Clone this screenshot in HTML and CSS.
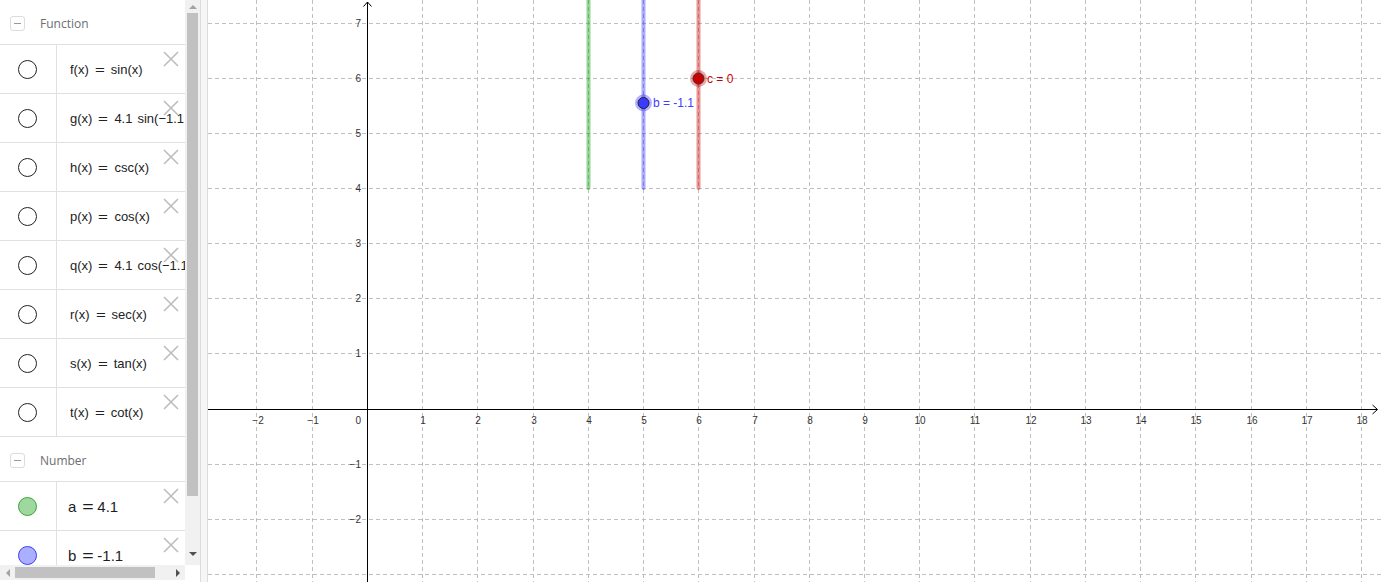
FILE: index.html
```html
<!DOCTYPE html>
<html>
<head>
<meta charset="utf-8">
<link rel="stylesheet" href="styles.css">
</head>
<body>
<div class="app">
  <aside class="av">
    <div class="av-main">
      <div class="av-list">
        <div class="group-head">
          <span class="collapse"><span class="minus"></span></span>
          <span class="group-title">Function</span>
        </div>
        <div class="row"><div class="marker"><span class="dot"></span></div><div class="formula">f(x)<span class="eq">=</span>sin(x)</div><svg class="del" viewBox="0 0 16 16"><path d="M1 1L15 15M15 1L1 15"/></svg></div>
        <div class="row"><div class="marker"><span class="dot"></span></div><div class="formula">g(x)<span class="eq">=</span>4.1<span class="sp"></span>sin(−1.1 (x − 0)) + 0</div><svg class="del" viewBox="0 0 16 16"><path d="M1 1L15 15M15 1L1 15"/></svg></div>
        <div class="row"><div class="marker"><span class="dot"></span></div><div class="formula">h(x)<span class="eq">=</span>csc(x)</div><svg class="del" viewBox="0 0 16 16"><path d="M1 1L15 15M15 1L1 15"/></svg></div>
        <div class="row"><div class="marker"><span class="dot"></span></div><div class="formula">p(x)<span class="eq">=</span>cos(x)</div><svg class="del" viewBox="0 0 16 16"><path d="M1 1L15 15M15 1L1 15"/></svg></div>
        <div class="row"><div class="marker"><span class="dot"></span></div><div class="formula">q(x)<span class="eq">=</span>4.1<span class="sp"></span>cos(−1.1 (x − 0)) + 0</div><svg class="del" viewBox="0 0 16 16"><path d="M1 1L15 15M15 1L1 15"/></svg></div>
        <div class="row"><div class="marker"><span class="dot"></span></div><div class="formula">r(x)<span class="eq">=</span>sec(x)</div><svg class="del" viewBox="0 0 16 16"><path d="M1 1L15 15M15 1L1 15"/></svg></div>
        <div class="row"><div class="marker"><span class="dot"></span></div><div class="formula">s(x)<span class="eq">=</span>tan(x)</div><svg class="del" viewBox="0 0 16 16"><path d="M1 1L15 15M15 1L1 15"/></svg></div>
        <div class="row"><div class="marker"><span class="dot"></span></div><div class="formula">t(x)<span class="eq">=</span>cot(x)</div><svg class="del" viewBox="0 0 16 16"><path d="M1 1L15 15M15 1L1 15"/></svg></div>
        <div class="group-head">
          <span class="collapse"><span class="minus"></span></span>
          <span class="group-title">Number</span>
        </div>
        <div class="row"><div class="marker"><span class="dot dot-green"></span></div><div class="formula num">a<span class="eq eq-num">=</span>4.1</div><svg class="del" viewBox="0 0 16 16"><path d="M1 1L15 15M15 1L1 15"/></svg></div>
        <div class="row"><div class="marker"><span class="dot dot-blue"></span></div><div class="formula num">b<span class="eq eq-num">=</span>-1.1</div><svg class="del" viewBox="0 0 16 16"><path d="M1 1L15 15M15 1L1 15"/></svg></div>
      </div>
      <div class="vscroll">
        <div class="arrow-box"><span class="tri tri-up"></span></div>
        <div class="vthumb"></div>
        <div class="vspace"></div>
        <div class="arrow-box arrow-down"><span class="tri tri-down"></span></div>
      </div>
    </div>
    <div class="av-bottom">
      <div class="hscroll">
        <div class="harrow"><span class="tri tri-left"></span></div>
        <div class="hthumb"></div>
        <div class="hspace"></div>
        <div class="harrow"><span class="tri tri-right"></span></div>
      </div>
      <div class="corner"></div>
    </div>
  </aside>
  <div class="divider"></div>
  <main class="ev">
    <svg class="graph" width="1174" height="582" viewBox="208 0 1174 582">
      <g class="grid">
        <path d="M256.5 0V582M312.5 0V582M422.5 0V582M477.5 0V582M533.5 0V582M588.5 0V582M643.5 0V582M698.5 0V582M754.5 0V582M809.5 0V582M864.5 0V582M919.5 0V582M974.5 0V582M1030.5 0V582M1085.5 0V582M1140.5 0V582M1195.5 0V582M1251.5 0V582M1306.5 0V582M1361.5 0V582"/>
        <path d="M208 23.5H1382M208 78.5H1382M208 133.5H1382M208 188.5H1382M208 243.5H1382M208 298.5H1382M208 353.5H1382M208 464.5H1382M208 519.5H1382M208 574.5H1382"/>
      </g>
      <g class="axes">
        <path d="M208 409.5H1377.5M367.5 582V2"/>
        <path d="M1372.5 405L1377.5 409.5L1372.5 414"/>
        <path d="M363.5 6.5L367.5 2L371.5 6.5"/>
      </g>
      <g class="xlabels">
        <text x="258" y="424">−2</text>
        <text x="313" y="424">−1</text>
        <text x="423" y="424">1</text>
        <text x="478" y="424">2</text>
        <text x="534" y="424">3</text>
        <text x="589" y="424">4</text>
        <text x="644" y="424">5</text>
        <text x="699" y="424">6</text>
        <text x="755" y="424">7</text>
        <text x="810" y="424">8</text>
        <text x="865" y="424">9</text>
        <text x="920" y="424">10</text>
        <text x="975" y="424">11</text>
        <text x="1031" y="424">12</text>
        <text x="1086" y="424">13</text>
        <text x="1141" y="424">14</text>
        <text x="1196" y="424">15</text>
        <text x="1252" y="424">16</text>
        <text x="1307" y="424">17</text>
        <text x="1362" y="424">18</text>
      </g>
      <g class="ylabels">
        <text x="361" y="424">0</text>
        <text x="361" y="27">7</text>
        <text x="361" y="82">6</text>
        <text x="361" y="137">5</text>
        <text x="361" y="192">4</text>
        <text x="361" y="247">3</text>
        <text x="361" y="302">2</text>
        <text x="361" y="357">1</text>
        <text x="361" y="468">−1</text>
        <text x="361" y="523">−2</text>
      </g>
      <g class="sliders">
        <path class="s-green" d="M588.5 -4V188"/>
        <path class="s-blue" d="M643.5 -4V188"/>
        <path class="s-red" d="M698.5 -4V188"/>
      </g>
      <circle class="halo-blue" cx="643.5" cy="103" r="8.5"/>
      <circle class="pt-blue" cx="643.5" cy="103" r="5.5"/>
      <circle class="halo-red" cx="698.5" cy="78.5" r="8.5"/>
      <circle class="pt-red" cx="698.5" cy="78.5" r="5.5"/>
      <text class="lbl-blue" x="653" y="107">b = -1.1</text>
      <text class="lbl-red" x="707" y="82.5">c = 0</text>
    </svg>
  </main>
</div>
</body>
</html>
```
FILE: styles.css
```css
* { box-sizing: border-box; }
html, body { margin: 0; padding: 0; }
body {
  font-family: "Liberation Sans", Arial, sans-serif;
  overflow: hidden;
  background: #fff;
}
.app {
  display: flex;
  width: 1382px;
  height: 582px;
  overflow: hidden;
}
.av {
  width: 200px;
  flex: none;
  display: flex;
  flex-direction: column;
  background: #fff;
}
.av-main {
  display: flex;
  height: 565px;
}
.av-list {
  width: 185px;
  height: 565px;
  overflow: hidden;
}
.group-head {
  height: 45px;
  border-bottom: 1px solid #e0e0e0;
  display: flex;
  align-items: center;
  padding: 2px 0 0 10px;
  gap: 15px;
}
.collapse {
  width: 15px;
  height: 15px;
  border: 1px solid #dcdcdc;
  border-radius: 3px;
  display: flex;
  align-items: center;
  justify-content: center;
  flex: none;
}
.minus {
  width: 7px;
  height: 1px;
  background: #9a9a9a;
}
.group-title {
  font-family: "Open Sans", "Liberation Sans", sans-serif;
  font-size: 12px;
  color: #6e6e6e;
}
.row {
  height: 49px;
  border-bottom: 1px solid #e0e0e0;
  display: flex;
  position: relative;
}
.marker {
  width: 57px;
  flex: none;
  border-right: 1px solid #e0e0e0;
  display: flex;
  align-items: center;
  justify-content: center;
}
.dot {
  width: 19px;
  height: 19px;
  border-radius: 50%;
  border: 1.3px solid #222;
  background: #fff;
  margin-right: 1px;
}
.dot-green { background: #9fd89f; border-color: #3aa53a; }
.dot-blue { background: #aab0ff; border-color: #3b3bf5; }
.formula {
  padding-left: 13px;
  display: flex;
  align-items: center;
  white-space: nowrap;
  font-size: 13px;
  color: #222;
}
.eq {
  display: inline-block;
  width: 10px;
  margin: 0 6px;
  text-align: center;
  transform: scaleX(1.3);
}
.sp { display: inline-block; width: 5px; }
.num {
  padding-left: 11px;
  font-size: 15px;
  color: #1e1e1e;
}
.eq-num { margin: 0 4px 0 7px; }
.del {
  position: absolute;
  left: 163px;
  top: 6px;
  width: 16px;
  height: 16px;
  fill: none;
  stroke: #bdbdbd;
  stroke-width: 1.6;
}
.vscroll {
  width: 15px;
  height: 565px;
  background: #f1f1f1;
  display: flex;
  flex-direction: column;
  align-items: center;
}
.arrow-box {
  height: 13px;
  width: 15px;
  display: flex;
  align-items: center;
  justify-content: center;
  flex: none;
}
.arrow-down { height: 17px; align-items: flex-start; padding-top: 4px; }
.vthumb {
  width: 11px;
  height: 483px;
  background: #c1c1c1;
  flex: none;
}
.vspace { flex: 1; }
.tri { width: 0; height: 0; display: block; }
.tri-up {
  border-left: 4px solid transparent;
  border-right: 4px solid transparent;
  border-bottom: 4px solid #a3a3a3;
}
.tri-down {
  border-left: 4px solid transparent;
  border-right: 4px solid transparent;
  border-top: 4px solid #505050;
}
.tri-left {
  border-top: 4px solid transparent;
  border-bottom: 4px solid transparent;
  border-right: 4px solid #a3a3a3;
}
.tri-right {
  border-top: 4px solid transparent;
  border-bottom: 4px solid transparent;
  border-left: 4px solid #505050;
}
.av-bottom {
  display: flex;
  height: 17px;
}
.hscroll {
  width: 185px;
  height: 15px;
  background: #f1f1f1;
  display: flex;
  align-items: center;
}
.harrow {
  width: 15px;
  height: 15px;
  display: flex;
  align-items: center;
  justify-content: center;
  flex: none;
}
.hthumb {
  width: 140px;
  height: 11px;
  background: #c1c1c1;
  flex: none;
}
.hspace { flex: 1; }
.corner { width: 15px; background: #fff; }
.divider {
  width: 8px;
  flex: none;
  background: #f6f6f6;
  border-left: 1px solid #dcdcdc;
  border-right: 1px solid #dcdcdc;
}
.ev {
  flex: 1;
  background: #fff;
  overflow: hidden;
}
.graph { display: block; }
.grid path {
  stroke: #c0c0c0;
  stroke-width: 1;
  stroke-dasharray: 4 3;
  fill: none;
}
.axes path {
  stroke: #000;
  stroke-width: 1;
  fill: none;
}
.xlabels text, .ylabels text {
  font-family: "Liberation Sans", Arial, sans-serif;
  font-size: 10px;
  fill: #333;
}
.xlabels text { text-anchor: middle; }
.ylabels text { text-anchor: end; }
.sliders path {
  stroke-width: 4;
  stroke-linecap: round;
  fill: none;
}
.s-green { stroke: rgba(0, 160, 0, 0.42); }
.s-blue { stroke: rgba(0, 0, 255, 0.33); }
.s-red { stroke: rgba(204, 0, 0, 0.42); }
.halo-blue { fill: rgba(0, 0, 255, 0.3); }
.halo-red { fill: rgba(204, 0, 0, 0.35); }
.pt-blue { fill: #3b3bff; stroke: #222; stroke-width: 1; }
.pt-red { fill: #cc0000; stroke: #333; stroke-width: 1; }
.lbl-blue, .lbl-red {
  font-family: "Liberation Sans", Arial, sans-serif;
  font-size: 12px;
}
.lbl-blue { fill: #4040ff; }
.lbl-red { fill: #cc0000; }
```
